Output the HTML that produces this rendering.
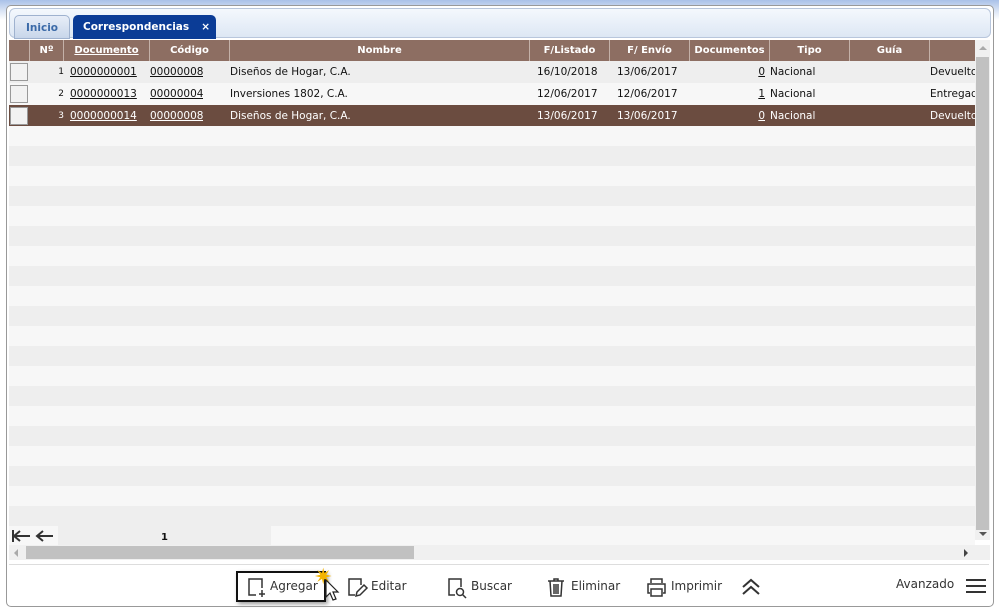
<!DOCTYPE html>
<html><head><meta charset="utf-8"><style>
*{box-sizing:border-box;margin:0;padding:0}
body{width:999px;height:611px;overflow:hidden;background:linear-gradient(#a9c1e8,#dfe8f6 12px,#fff 20px);font-family:"DejaVu Sans","Liberation Sans",sans-serif;font-size:10.5px;color:#111;position:relative}
.panel{position:absolute;left:6px;top:5px;width:988px;height:602px;border:1px solid #999;border-radius:5px;background:#fff}
.tabbar{position:absolute;left:2px;top:2px;width:982px;height:30px;border:1px solid #b8c6dc;border-radius:6px;background:linear-gradient(#f4f8fd,#dde7f4)}
.tab{position:absolute;top:6px;height:24px;border-radius:5px 5px 0 0;font-weight:bold;font-size:10.5px;padding-top:6px}
.t1{left:4px;width:56px;background:linear-gradient(#e8eef8,#c8d6ea);border:1px solid #9fb2cf;color:#3b6aa8;text-align:center}
.t2{left:63px;width:143px;background:#0b3c96;color:#fff;padding-left:10px}
.t2 b{position:absolute;right:6px;top:6px}
.grid{position:absolute;left:9px;top:40px;width:966px;height:486px;overflow:hidden;background:repeating-linear-gradient(#f7f7f7 0 20px,#eee 20px 40px);background-position:0 6px}
.hdr{position:absolute;left:0;top:0;height:21px;width:966px;background:#8d6e62}
.c{position:absolute;top:0;height:100%;white-space:nowrap;overflow:hidden}
.hdr .c{color:#fff;font-weight:bold;text-align:center;padding-top:5px;border-left:1px solid #c4b1a8;font-size:10px}
.row{position:absolute;left:0;width:966px;height:21px}
.row .c{padding-top:5px}
.cb{position:absolute;left:1px;top:2px;width:18px;height:18px;border:1px solid #999;background:#f2f2f2}
u{text-decoration:underline}
.sel{background:#6b4c40;color:#fff}
.vs{position:absolute;left:975px;top:40px;width:15px;height:500px;background:#f0f0f0}
.pager{position:absolute;left:9px;top:526px;width:966px;height:19px;background:#f7f7f7}
.hs{position:absolute;left:9px;top:545px;width:981px;height:15px;background:#f0f0f0}
.tb{position:absolute;left:9px;top:564px;width:980px;height:1px;background:#ddd}
.btn{position:absolute;top:579px;font-size:12px;color:#333;font-family:"DejaVu Sans",sans-serif}
</style></head><body>
<div class="panel">
<div class="tabbar"><div class="tab t1">Inicio</div><div class="tab t2">Correspondencias<b>×</b></div></div>
</div>
<div class="grid">
<div class="hdr">
<div class="c" style="left:20px;width:34px">Nº</div>
<div class="c" style="left:54px;width:86px"><u>Documento</u></div>
<div class="c" style="left:140px;width:80px">Código</div>
<div class="c" style="left:220px;width:300px">Nombre</div>
<div class="c" style="left:520px;width:80px">F/Listado</div>
<div class="c" style="left:600px;width:80px">F/ Envío</div>
<div class="c" style="left:680px;width:80px">Documentos</div>
<div class="c" style="left:760px;width:80px">Tipo</div>
<div class="c" style="left:840px;width:80px">Guía</div>
<div class="c" style="left:920px;width:60px"></div>
</div>
<div class="row" style="top:21px;background:#eee"><div class="cb"></div>
<div class="c" style="left:20px;width:35px;text-align:right;font-size:9px;padding-top:6px">1</div>
<div class="c" style="left:61px"><u>0000000001</u></div><div class="c" style="left:141px"><u>00000008</u></div>
<div class="c" style="left:221px">Diseños de Hogar, C.A.</div><div class="c" style="left:528px">16/10/2018</div><div class="c" style="left:608px">13/06/2017</div>
<div class="c" style="left:680px;width:76px;text-align:right"><u>0</u></div><div class="c" style="left:761px">Nacional</div><div class="c" style="left:921px">Devuelto</div></div>
<div class="row" style="top:43px;background:#f7f7f7"><div class="cb"></div>
<div class="c" style="left:20px;width:35px;text-align:right;font-size:9px;padding-top:6px">2</div>
<div class="c" style="left:61px"><u>0000000013</u></div><div class="c" style="left:141px"><u>00000004</u></div>
<div class="c" style="left:221px">Inversiones 1802, C.A.</div><div class="c" style="left:528px">12/06/2017</div><div class="c" style="left:608px">12/06/2017</div>
<div class="c" style="left:680px;width:76px;text-align:right"><u>1</u></div><div class="c" style="left:761px">Nacional</div><div class="c" style="left:921px">Entregado</div></div>
<div class="row sel" style="top:65px"><div class="cb"></div>
<div class="c" style="left:20px;width:35px;text-align:right;font-size:9px;padding-top:6px">3</div>
<div class="c" style="left:61px"><u>0000000014</u></div><div class="c" style="left:141px"><u>00000008</u></div>
<div class="c" style="left:221px">Diseños de Hogar, C.A.</div><div class="c" style="left:528px">13/06/2017</div><div class="c" style="left:608px">13/06/2017</div>
<div class="c" style="left:680px;width:76px;text-align:right"><u>0</u></div><div class="c" style="left:761px">Nacional</div><div class="c" style="left:921px">Devuelto</div></div>
</div>
<div class="vs"><div style="position:absolute;left:1px;top:17px;width:13px;height:473px;background:#c1c1c1"></div><div style="position:absolute;left:4px;top:6px;border:4px solid transparent;border-bottom-color:#aaa;border-top:0"></div><div style="position:absolute;left:4px;top:492px;border:4px solid transparent;border-top-color:#555;border-bottom:0"></div></div>
<div class="pager"><div style="position:absolute;left:49px;top:0;width:213px;height:19px;background:#eee"></div>
<svg style="position:absolute;left:2px;top:3px" width="46" height="14" fill="none" stroke="#333" stroke-width="2"><path d="M2 1v12M3 7h16M9 2L3 7l6 5M26 7h16M32 2l-6 5 6 5"/></svg>
<div style="position:absolute;left:152px;top:6px;font-size:10px;font-weight:bold">1</div></div>
<div class="hs"><div style="position:absolute;left:17px;top:1px;width:388px;height:13px;background:#c1c1c1"></div>
<div style="position:absolute;left:5px;top:4px;border:4px solid transparent;border-right-color:#aaa;border-left:0"></div>
<div style="position:absolute;left:955px;top:4px;border:4px solid transparent;border-left-color:#444;border-right:0"></div></div>
<div class="tb"></div>
<div style="position:absolute;left:236px;top:571px;width:90px;height:31px;border:2px solid #111;box-shadow:2px 2px 4px #999"></div>
<svg style="position:absolute;left:247px;top:577px" width="20" height="22" fill="none" stroke="#333" stroke-width="1.5"><path d="M9 18H2V2h13v9"/><path d="M15 13v7M12 17h6"/></svg>
<div class="btn" style="left:270px">Agregar</div>
<div style="position:absolute;left:314px;top:565px;color:#f3b400;font-size:22px">✷</div>
<svg style="position:absolute;left:324px;top:579px" width="16" height="24"><path d="M2 1v17l4-4 3 7 3-1-3-7h5z" fill="#fff" stroke="#222" stroke-width="1.2"/></svg>
<svg style="position:absolute;left:347px;top:577px" width="22" height="22" fill="none" stroke="#333" stroke-width="1.5"><path d="M8 18H2V2h12v6"/><path d="M9 19l1-4 7-7 3 3-7 7z"/></svg>
<div class="btn" style="left:371px">Editar</div>
<svg style="position:absolute;left:447px;top:577px" width="22" height="22" fill="none" stroke="#333" stroke-width="1.5"><path d="M8 18H2V2h12v8"/><circle cx="13" cy="15" r="3.5"/><path d="M15.5 17.5L19 21"/></svg>
<div class="btn" style="left:471px">Buscar</div>
<svg style="position:absolute;left:547px;top:577px" width="20" height="22" fill="none" stroke="#333" stroke-width="1.5"><path d="M1 4h16M7 4V2h4v2M3 4l1 15h10l1-15M7 7v10M9 7v10M11 7v10"/></svg>
<div class="btn" style="left:571px">Eliminar</div>
<svg style="position:absolute;left:647px;top:577px" width="20" height="22" fill="none" stroke="#333" stroke-width="1.5"><path d="M4 6V2h11v4M3 16H1V7h17v9h-2M4 12h11v7H4z"/></svg>
<div class="btn" style="left:671px">Imprimir</div>
<svg style="position:absolute;left:741px;top:577px" width="20" height="20" fill="none" stroke="#333" stroke-width="2"><path d="M2 10l8-7 8 7M2 17l8-7 8 7"/></svg>
<div class="btn" style="left:896px;top:577px">Avanzado</div>
<svg style="position:absolute;left:965px;top:578px" width="22" height="16" stroke="#333" stroke-width="2"><path d="M1 2h20M1 8h20M1 14h20"/></svg>
</body></html>
